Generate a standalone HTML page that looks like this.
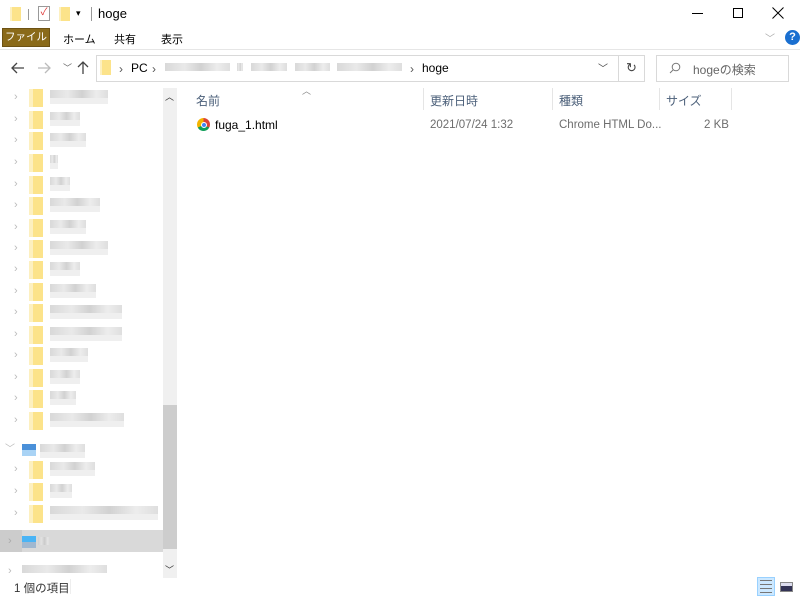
<!DOCTYPE html><html><head><meta charset="utf-8"><style>
*{margin:0;padding:0;box-sizing:border-box}
body{width:800px;height:599px;background:#fff;font-family:"Liberation Sans","Noto Sans CJK JP",sans-serif;font-size:12px;color:#000;position:relative;overflow:hidden}
.a{position:absolute}
.fold{position:absolute;width:14px;height:18px;background:#fce38a;border-left:4px solid #fdf0c0}
.chev{position:absolute;color:#bbb;font-size:11px}
.blur{position:absolute;height:14px;background:linear-gradient(90deg,#cfcfcf,#e4e4e4 30%,#c6c6c6 55%,#e8e8e8 80%,#d6d6d6);opacity:.8}
.blur2{position:absolute;height:6px;background:#efefef}
.hd{position:absolute;top:92px;color:#4c607a;font-size:12px}
.sep{position:absolute;top:88px;width:1px;height:22px;background:#e5e5e5}
</style></head><body>
<div class="fold" style="left:10px;top:7px;width:11px;height:14px;border-left-width:2px"></div>
<div class="a" style="left:28px;top:9px;width:1px;height:11px;background:#999"></div>
<div class="a" style="left:38px;top:6px;width:12px;height:15px;border:1px solid #999;background:#fff;color:#d33;font-size:10px;line-height:12px;text-align:center">✓</div>
<div class="fold" style="left:59px;top:7px;width:11px;height:14px;border-left-width:2px"></div>
<div class="a" style="left:76px;top:8px;font-size:9px">▾</div>
<div class="a" style="left:91px;top:7px;width:1px;height:14px;background:#999"></div>
<div class="a" style="left:98px;top:6px;font-size:13px">hoge</div>
<div class="a" style="left:692px;top:13px;width:11px;height:1px;background:#000"></div>
<div class="a" style="left:733px;top:8px;width:10px;height:10px;border:1px solid #000"></div>
<svg class="a" style="left:772px;top:7px" width="12" height="12"><path d="M0.5 0.5L11.5 11.5M11.5 0.5L0.5 11.5" stroke="#000" stroke-width="1"/></svg>
<div class="a" style="left:2px;top:28px;width:48px;height:19px;background:#8a6a1a;border:1px solid #6d5214;color:#fff;font-size:10.5px;line-height:17px;text-align:center">ファイル</div>
<div class="a" style="left:63px;top:31px;font-size:11px">ホーム</div>
<div class="a" style="left:114px;top:31px;font-size:11px">共有</div>
<div class="a" style="left:161px;top:31px;font-size:11px">表示</div>
<div class="a" style="left:765px;top:30px;color:#aaa;font-size:10px">﹀</div>
<div class="a" style="left:785px;top:30px;width:15px;height:15px;border-radius:50%;background:#1a6fd0;color:#fff;font-size:11px;font-weight:bold;text-align:center;line-height:15px">?</div>
<div class="a" style="left:0;top:49px;width:800px;height:1px;background:#e6e6e6"></div>
<svg class="a" style="left:11px;top:62px" width="14" height="12"><path d="M13 6H1M6 1L1 6L6 11" stroke="#444" stroke-width="1.3" fill="none"/></svg>
<svg class="a" style="left:37px;top:62px" width="14" height="12"><path d="M1 6H13M8 1L13 6L8 11" stroke="#bbb" stroke-width="1.3" fill="none"/></svg>
<div class="a" style="left:63px;top:61px;font-size:9px;color:#666">﹀</div>
<svg class="a" style="left:77px;top:61px" width="12" height="14"><path d="M6 13V1M1 6L6 1L11 6" stroke="#444" stroke-width="1.3" fill="none"/></svg>
<div class="a" style="left:96px;top:55px;width:549px;height:27px;border:1px solid #d9d9d9"></div>
<div class="fold" style="left:100px;top:60px;width:11px;height:15px;border-left-width:2px"></div>
<div class="a" style="left:119px;top:62px;color:#555">›</div>
<div class="a" style="left:131px;top:61px">PC</div>
<div class="a" style="left:152px;top:62px;color:#555">›</div>
<div class="blur" style="left:165px;top:63px;width:65px;height:8px"></div>
<div class="blur" style="left:237px;top:63px;width:6px;height:8px"></div>
<div class="blur" style="left:251px;top:63px;width:36px;height:8px"></div>
<div class="blur" style="left:295px;top:63px;width:35px;height:8px"></div>
<div class="blur" style="left:337px;top:63px;width:65px;height:8px"></div>
<div class="a" style="left:410px;top:62px;color:#555">›</div>
<div class="a" style="left:422px;top:61px">hoge</div>
<div class="a" style="left:598px;top:60px;color:#444;font-size:10px">﹀</div>
<div class="a" style="left:618px;top:56px;width:1px;height:25px;background:#d9d9d9"></div>
<div class="a" style="left:626px;top:60px;color:#444;font-size:13px">↻</div>
<div class="a" style="left:656px;top:55px;width:133px;height:27px;border:1px solid #d9d9d9"></div>
<svg class="a" style="left:669px;top:62px" width="12" height="12"><circle cx="7" cy="5" r="3.8" stroke="#777" fill="none"/><path d="M4.3 7.7L1 11" stroke="#777"/></svg>
<div class="a" style="left:693px;top:61px;color:#666">hogeの検索</div>
<div id="sb"></div>
<div class="a" style="left:163px;top:88px;width:14px;height:490px;background:#f0f0f0"></div>
<div class="a" style="left:165px;top:90px;font-size:9px;color:#333">︿</div>
<div class="a" style="left:163px;top:405px;width:14px;height:144px;background:#cdcdcd"></div>
<div class="a" style="left:165px;top:563px;font-size:9px;color:#333">﹀</div>
<div class="a" style="left:302px;top:84px;font-size:9px;color:#888">︿</div>
<div class="hd" style="left:196px">名前</div>
<div class="sep" style="left:423px"></div>
<div class="hd" style="left:430px">更新日時</div>
<div class="sep" style="left:552px"></div>
<div class="hd" style="left:559px">種類</div>
<div class="sep" style="left:659px"></div>
<div class="hd" style="left:666px">サイズ</div>
<div class="sep" style="left:731px"></div>
<div class="a" style="left:197px;top:118px;width:13px;height:13px;border-radius:50%;background:conic-gradient(#db4437 0 120deg,#0f9d58 120deg 240deg,#f4b400 240deg)"></div>
<div class="a" style="left:200.5px;top:121.5px;width:6px;height:6px;border-radius:50%;background:#4285f4;border:1px solid #fff"></div>
<div class="a" style="left:215px;top:118px;font-size:12px">fuga_1.html</div>
<div class="a" style="left:430px;top:119px;color:#6d6d6d;font-size:11.5px">2021/07/24 1:32</div>
<div class="a" style="left:559px;top:119px;color:#6d6d6d;font-size:11.5px">Chrome HTML Do...</div>
<div class="a" style="left:704px;top:119px;color:#6d6d6d;font-size:11.5px">2 KB</div>
<div class="a" style="left:14px;top:580px;color:#333;font-size:11.5px">1 個の項目</div>
<div class="a" style="left:70px;top:579px;width:1px;height:15px;background:#eee"></div>
<div class="a" style="left:757px;top:577px;width:18px;height:19px;background:#cce8ff;border:1px solid #99d1ff"></div>
<div class="a" style="left:760px;top:580px;width:12px;height:13px;background:repeating-linear-gradient(#777 0 1px,transparent 1px 4px)"></div>
<div class="a" style="left:780px;top:582px;width:13px;height:10px;border:1px solid #888;background:linear-gradient(#dde 0 40%,#335 40%)"></div>
<script>
var ys=[98,120,141,163,185,206,228,249,270,292,313,335,356,378,399,421],w=[58,30,36,8,20,50,36,58,30,46,72,72,38,30,26,74],h='';
ys.forEach(function(y,i){h+='<div class="chev" style="left:14px;top:'+(y-7)+'px">›</div><div class="fold" style="left:29px;top:'+(y-9)+'px"></div><div class="blur" style="left:50px;top:'+(y-8)+'px;width:'+w[i]+'px;height:8px"></div><div class="blur2" style="left:50px;top:'+y+'px;width:'+w[i]+'px"></div>';});
h+='<div class="chev" style="left:5px;top:440px;font-size:10px">﹀</div><div class="a" style="left:22px;top:444px;width:14px;height:12px;background:linear-gradient(#4a90d9 50%,#a9d3f5 50%)"></div><div class="blur" style="left:40px;top:444px;width:45px;height:8px"></div><div class="blur2" style="left:40px;top:452px;width:45px"></div>';
[[470,45],[492,22],[514,108]].forEach(function(a){h+='<div class="chev" style="left:14px;top:'+(a[0]-7)+'px">›</div><div class="fold" style="left:29px;top:'+(a[0]-9)+'px"></div><div class="blur" style="left:50px;top:'+(a[0]-8)+'px;width:'+a[1]+'px;height:8px"></div><div class="blur2" style="left:50px;top:'+a[0]+'px;width:'+a[1]+'px"></div>';});
h+='<div class="a" style="left:0;top:530px;width:163px;height:22px;background:#d9d9d9"></div><div class="a" style="left:0;top:530px;width:22px;height:22px;background:#ccc"></div><div class="chev" style="left:8px;top:535px;color:#aaa">›</div><div class="a" style="left:22px;top:536px;width:14px;height:12px;background:linear-gradient(#4ab4f5 50%,#a0b8d0 50%)"></div><div class="blur" style="left:38px;top:537px;width:12px;height:8px"></div>';
h+='<div class="chev" style="left:8px;top:565px">›</div><div class="blur" style="left:22px;top:565px;width:85px;height:8px"></div>';
document.getElementById('sb').innerHTML=h;
</script>
</body></html>
